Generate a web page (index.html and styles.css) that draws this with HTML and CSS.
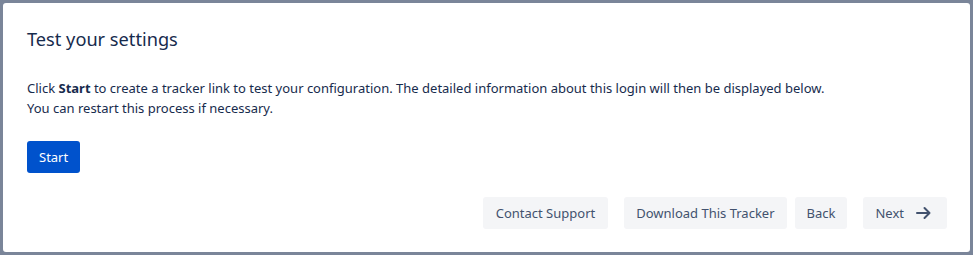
FILE: index.html
```html
<!DOCTYPE html>
<html lang="en">
<head>
<meta charset="utf-8">
<title>Test your settings</title>
<link rel="stylesheet" href="styles.css">
</head>
<body>
<div class="backdrop">
  <div class="dialog">
    <h1 class="title">Test your settings</h1>
    <p class="text">Click <strong>Start</strong> to create a tracker link to test your configuration. The detailed information about this login will then be displayed below.<br>You can restart this process if necessary.</p>
    <div class="start-row"><button class="btn btn-primary">Start</button></div>
    <div class="footer">
      <button class="btn btn-subtle btn-support">Contact Support</button>
      <button class="btn btn-subtle btn-wide-gap">Download This Tracker</button>
      <button class="btn btn-subtle">Back</button>
      <button class="btn btn-subtle btn-next btn-wide-gap">Next
        <svg class="arrow" width="24" height="24" viewBox="0 0 24 24" aria-hidden="true"><path d="M5 12h12.5M12.5 7l5 5-5 5" fill="none" stroke="currentColor" stroke-width="2" stroke-linecap="round" stroke-linejoin="round"/></svg>
      </button>
    </div>
  </div>
</div>
</body>
</html>
```
FILE: styles.css
```css
* { box-sizing: border-box; }
html, body {
  margin: 0;
  padding: 0;
  width: 973px;
  height: 255px;
  overflow: hidden;
}
body {
  font-family: "Noto Sans", "Open Sans", sans-serif;
  color: #172B4D;
  background: #7a8599;
}
.backdrop {
  width: 973px;
  height: 255px;
  padding: 3px;
}
.dialog {
  width: 967px;
  height: 249px;
  background: #fff;
  border-radius: 3px;
  padding: 24px 23px 0 24px;
  display: flex;
  flex-direction: column;
}
.title {
  margin: 0;
  font-size: 18.2px;
  line-height: 24px;
  font-weight: 400;
  color: #172B4D;
}
.text {
  margin: 27px 0 0 0;
  font-size: 13px;
  line-height: 20px;
}
.text strong { font-weight: 700; }
.start-row {
  margin-top: 23px;
  display: flex;
}
.btn {
  font-family: inherit;
  font-size: 13px;
  height: 32px;
  line-height: 32px;
  border: none;
  border-radius: 3px;
  padding: 0 12px;
  cursor: pointer;
  display: inline-flex;
  align-items: center;
}
.btn-primary {
  background: #0052CC;
  color: #fff;
}
.footer {
  margin-top: 24px;
  display: flex;
  justify-content: flex-end;
  gap: 8px;
}
.btn-subtle {
  background: #F4F5F7;
  color: #42526E;
}
.btn-support { padding: 0 13px; }
.btn-wide-gap { margin-left: 8px; }
.btn-next { gap: 8px; padding-right: 11px; }
.arrow { display: block; color: #42526E; }
```
